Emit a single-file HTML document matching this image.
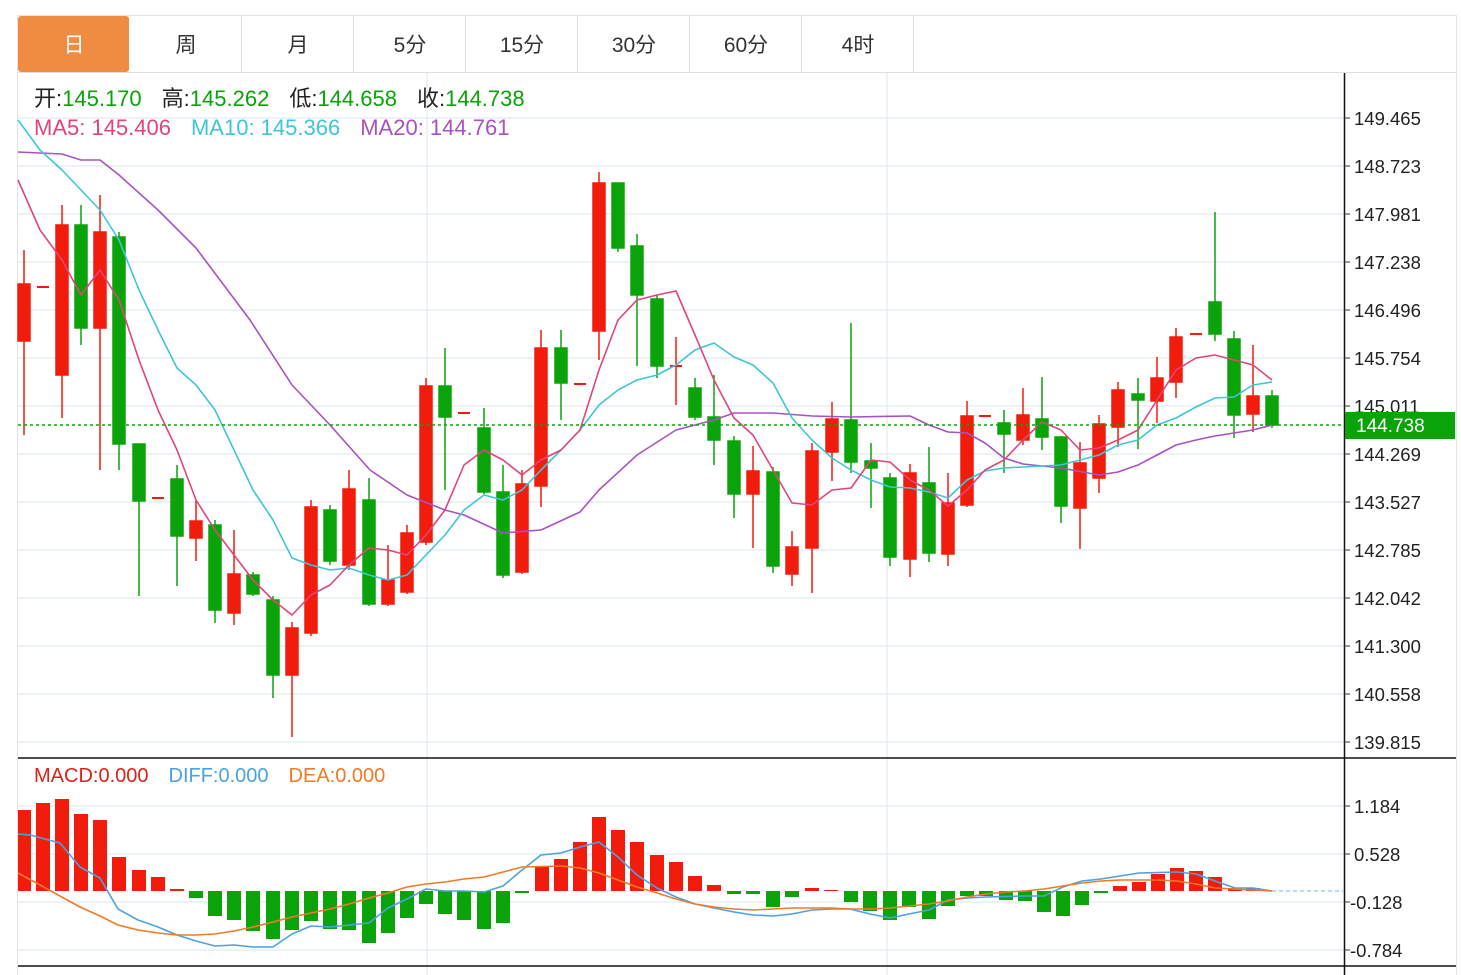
<!DOCTYPE html>
<html><head><meta charset="utf-8"><style>
html,body{margin:0;padding:0;background:#fff;}
svg{display:block;font-family:"Liberation Sans","Noto Sans CJK SC",sans-serif;}
</style></head><body>
<svg width="1461" height="975" viewBox="0 0 1461 975" xmlns="http://www.w3.org/2000/svg">
<rect x="17.5" y="15.5" width="1439" height="980" fill="#fff" stroke="#e2e2e2"/>
<rect x="18" y="16" width="111" height="56" rx="3" fill="#f08c42"/>
<g stroke="#e0e0e0"><line x1="241.5" y1="16" x2="241.5" y2="72"/><line x1="353.5" y1="16" x2="353.5" y2="72"/><line x1="465.5" y1="16" x2="465.5" y2="72"/><line x1="577.5" y1="16" x2="577.5" y2="72"/><line x1="689.5" y1="16" x2="689.5" y2="72"/><line x1="801.5" y1="16" x2="801.5" y2="72"/><line x1="913.5" y1="16" x2="913.5" y2="72"/><line x1="18" y1="72.5" x2="1456" y2="72.5"/></g>
<g font-size="21" text-anchor="middle" fill="#333"><text x="74" y="52" fill="#fff">日</text><text x="186" y="52">周</text><text x="298" y="52">月</text><text x="410" y="52">5分</text><text x="522" y="52">15分</text><text x="634" y="52">30分</text><text x="746" y="52">60分</text><text x="858" y="52">4时</text></g>
<g stroke="#e6edf2" stroke-width="1.5">
<line x1="18" y1="118" x2="1344" y2="118"/><line x1="18" y1="166" x2="1344" y2="166"/><line x1="18" y1="214" x2="1344" y2="214"/><line x1="18" y1="262" x2="1344" y2="262"/><line x1="18" y1="310" x2="1344" y2="310"/><line x1="18" y1="358" x2="1344" y2="358"/><line x1="18" y1="406" x2="1344" y2="406"/><line x1="18" y1="454" x2="1344" y2="454"/><line x1="18" y1="502" x2="1344" y2="502"/><line x1="18" y1="550" x2="1344" y2="550"/><line x1="18" y1="598" x2="1344" y2="598"/><line x1="18" y1="646" x2="1344" y2="646"/><line x1="18" y1="694" x2="1344" y2="694"/><line x1="18" y1="742" x2="1344" y2="742"/>
<line x1="18" y1="806" x2="1344" y2="806"/><line x1="18" y1="854" x2="1344" y2="854"/><line x1="18" y1="902" x2="1344" y2="902"/><line x1="18" y1="950" x2="1344" y2="950"/>
<line x1="427" y1="73" x2="427" y2="975"/><line x1="887" y1="73" x2="887" y2="975"/>
</g>
<g stroke="#111" stroke-width="1.5"><line x1="18" y1="758" x2="1456" y2="758"/><line x1="18" y1="966" x2="1456" y2="966"/><line x1="1344.5" y1="73" x2="1344.5" y2="975"/></g>
<g stroke="#333"><line x1="1344" y1="118" x2="1350" y2="118"/><line x1="1344" y1="166" x2="1350" y2="166"/><line x1="1344" y1="214" x2="1350" y2="214"/><line x1="1344" y1="262" x2="1350" y2="262"/><line x1="1344" y1="310" x2="1350" y2="310"/><line x1="1344" y1="358" x2="1350" y2="358"/><line x1="1344" y1="406" x2="1350" y2="406"/><line x1="1344" y1="454" x2="1350" y2="454"/><line x1="1344" y1="502" x2="1350" y2="502"/><line x1="1344" y1="550" x2="1350" y2="550"/><line x1="1344" y1="598" x2="1350" y2="598"/><line x1="1344" y1="646" x2="1350" y2="646"/><line x1="1344" y1="694" x2="1350" y2="694"/><line x1="1344" y1="742" x2="1350" y2="742"/><line x1="1344" y1="806" x2="1350" y2="806"/><line x1="1344" y1="854" x2="1350" y2="854"/><line x1="1344" y1="902" x2="1350" y2="902"/><line x1="1344" y1="950" x2="1350" y2="950"/></g>
<g font-size="18.5" fill="#222"><text x="1354" y="125">149.465</text><text x="1354" y="173">148.723</text><text x="1354" y="221">147.981</text><text x="1354" y="269">147.238</text><text x="1354" y="317">146.496</text><text x="1354" y="365">145.754</text><text x="1354" y="413">145.011</text><text x="1354" y="461">144.269</text><text x="1354" y="509">143.527</text><text x="1354" y="557">142.785</text><text x="1354" y="605">142.042</text><text x="1354" y="653">141.300</text><text x="1354" y="701">140.558</text><text x="1354" y="749">139.815</text>
<text x="1354" y="813">1.184</text><text x="1354" y="861">0.528</text><text x="1350" y="909">-0.128</text><text x="1350" y="957">-0.784</text></g>
<g id="c">
<g fill="#f21c0c" stroke="#f21c0c" stroke-width="1.5">
<line x1="24" y1="250" x2="24" y2="435"/><rect x="18" y="284" width="12" height="57"/>
<line x1="37" y1="287" x2="49" y2="287" stroke-width="2"/>
<line x1="62" y1="205" x2="62" y2="418"/><rect x="56" y="225" width="12" height="150"/>
<line x1="100" y1="195" x2="100" y2="470"/><rect x="94" y="232" width="12" height="96"/>
<line x1="152" y1="498" x2="164" y2="498" stroke-width="2"/>
<line x1="196" y1="500" x2="196" y2="561"/><rect x="190" y="521" width="12" height="17"/>
<line x1="234" y1="530" x2="234" y2="625"/><rect x="228" y="574" width="12" height="39"/>
<line x1="292" y1="622" x2="292" y2="737"/><rect x="286" y="628" width="12" height="47"/>
<line x1="311" y1="500" x2="311" y2="636"/><rect x="305" y="507" width="12" height="126"/>
<line x1="349" y1="470" x2="349" y2="570"/><rect x="343" y="489" width="12" height="76"/>
<line x1="388" y1="545" x2="388" y2="606"/><rect x="382" y="580" width="12" height="24"/>
<line x1="407" y1="525" x2="407" y2="594"/><rect x="401" y="533" width="12" height="59"/>
<line x1="426" y1="378" x2="426" y2="545"/><rect x="420" y="386" width="12" height="156"/>
<line x1="458" y1="413" x2="470" y2="413" stroke-width="2"/>
<line x1="522" y1="470" x2="522" y2="574"/><rect x="516" y="484" width="12" height="88"/>
<line x1="541" y1="330" x2="541" y2="507"/><rect x="535" y="348" width="12" height="138"/>
<line x1="574" y1="384" x2="586" y2="384" stroke-width="2"/>
<line x1="599" y1="172" x2="599" y2="360"/><rect x="593" y="183" width="12" height="148"/>
<line x1="676" y1="337" x2="676" y2="405"/><line x1="670" y1="366" x2="682" y2="366" stroke-width="2"/>
<line x1="753" y1="446" x2="753" y2="548"/><rect x="747" y="471" width="12" height="23"/>
<line x1="792" y1="531" x2="792" y2="586"/><rect x="786" y="547" width="12" height="27"/>
<line x1="812" y1="443" x2="812" y2="593"/><rect x="806" y="451" width="12" height="97"/>
<line x1="832" y1="402" x2="832" y2="481"/><rect x="826" y="419" width="12" height="33"/>
<line x1="910" y1="464" x2="910" y2="577"/><rect x="904" y="473" width="12" height="86"/>
<line x1="948" y1="473" x2="948" y2="566"/><rect x="942" y="503" width="12" height="51"/>
<line x1="967" y1="401" x2="967" y2="507"/><rect x="961" y="416" width="12" height="89"/>
<line x1="979" y1="416" x2="991" y2="416" stroke-width="2"/>
<line x1="1023" y1="388" x2="1023" y2="445"/><rect x="1017" y="415" width="12" height="25"/>
<line x1="1080" y1="442" x2="1080" y2="549"/><rect x="1074" y="463" width="12" height="45"/>
<line x1="1099" y1="415" x2="1099" y2="493"/><rect x="1093" y="424" width="12" height="54"/>
<line x1="1118" y1="382" x2="1118" y2="447"/><rect x="1112" y="390" width="12" height="37"/>
<line x1="1157" y1="357" x2="1157" y2="423"/><rect x="1151" y="378" width="12" height="23"/>
<line x1="1176" y1="328" x2="1176" y2="398"/><rect x="1170" y="337" width="12" height="45"/>
<line x1="1190" y1="334" x2="1202" y2="334" stroke-width="2"/>
<line x1="1253" y1="345" x2="1253" y2="432"/><rect x="1247" y="396" width="12" height="18"/>
</g>
<g fill="#0aa30a" stroke="#0aa30a" stroke-width="1.5">
<line x1="81" y1="205" x2="81" y2="345"/><rect x="75" y="225" width="12" height="103"/>
<line x1="119" y1="232" x2="119" y2="470"/><rect x="113" y="237" width="12" height="207"/>
<line x1="139" y1="444" x2="139" y2="596"/><rect x="133" y="444" width="12" height="57"/>
<line x1="177" y1="465" x2="177" y2="586"/><rect x="171" y="479" width="12" height="57"/>
<line x1="215" y1="520" x2="215" y2="623"/><rect x="209" y="525" width="12" height="85"/>
<line x1="253" y1="572" x2="253" y2="596"/><rect x="247" y="575" width="12" height="19"/>
<line x1="273" y1="596" x2="273" y2="698"/><rect x="267" y="600" width="12" height="75"/>
<line x1="330" y1="505" x2="330" y2="565"/><rect x="324" y="510" width="12" height="51"/>
<line x1="369" y1="478" x2="369" y2="606"/><rect x="363" y="500" width="12" height="104"/>
<line x1="445" y1="348" x2="445" y2="490"/><rect x="439" y="386" width="12" height="31"/>
<line x1="484" y1="408" x2="484" y2="494"/><rect x="478" y="428" width="12" height="64"/>
<line x1="503" y1="465" x2="503" y2="578"/><rect x="497" y="492" width="12" height="83"/>
<line x1="561" y1="330" x2="561" y2="420"/><rect x="555" y="348" width="12" height="35"/>
<line x1="618" y1="183" x2="618" y2="252"/><rect x="612" y="183" width="12" height="65"/>
<line x1="637" y1="234" x2="637" y2="366"/><rect x="631" y="246" width="12" height="49"/>
<line x1="657" y1="295" x2="657" y2="378"/><rect x="651" y="299" width="12" height="67"/>
<line x1="695" y1="378" x2="695" y2="420"/><rect x="689" y="388" width="12" height="29"/>
<line x1="714" y1="375" x2="714" y2="465"/><rect x="708" y="417" width="12" height="23"/>
<line x1="734" y1="436" x2="734" y2="518"/><rect x="728" y="441" width="12" height="53"/>
<line x1="773" y1="467" x2="773" y2="573"/><rect x="767" y="472" width="12" height="94"/>
<line x1="851" y1="323" x2="851" y2="473"/><rect x="845" y="420" width="12" height="42"/>
<line x1="871" y1="443" x2="871" y2="508"/><rect x="865" y="461" width="12" height="7"/>
<line x1="890" y1="473" x2="890" y2="566"/><rect x="884" y="478" width="12" height="79"/>
<line x1="929" y1="447" x2="929" y2="562"/><rect x="923" y="483" width="12" height="70"/>
<line x1="1004" y1="410" x2="1004" y2="473"/><rect x="998" y="423" width="12" height="11"/>
<line x1="1042" y1="377" x2="1042" y2="450"/><rect x="1036" y="419" width="12" height="18"/>
<line x1="1061" y1="436" x2="1061" y2="523"/><rect x="1055" y="437" width="12" height="69"/>
<line x1="1138" y1="378" x2="1138" y2="449"/><rect x="1132" y="394" width="12" height="6"/>
<line x1="1215" y1="212" x2="1215" y2="341"/><rect x="1209" y="302" width="12" height="32"/>
<line x1="1234" y1="331" x2="1234" y2="438"/><rect x="1228" y="339" width="12" height="76"/>
<line x1="1272" y1="390" x2="1272" y2="428"/><rect x="1266" y="396" width="12" height="29"/>
</g>
</g>
<g fill="none" stroke-width="1.6" stroke-linejoin="round">
<polyline stroke="#a653c0" points="18,152 62,154 81,160 100,160 119,175 158,210 196,248 250,320 292,385 330,425 370,470 407,495 445,510 464,515 503,533 541,530 580,512 599,490 637,455 676,430 695,425 714,420 734,413 773,413 812,416 851,417 910,416 929,425 948,432 967,433 985,443 1004,458 1023,464 1061,468 1099,475 1118,472 1138,465 1157,455 1176,445 1196,440 1215,436 1253,430 1272,425"/>
<polyline stroke="#3ec6d6" points="18,120 40,150 62,170 81,190 100,210 119,240 139,290 158,330 177,368 196,385 215,410 234,450 253,490 273,520 292,558 311,565 330,570 349,568 369,575 388,580 407,575 426,555 445,535 464,510 484,495 503,500 522,490 541,470 561,450 580,430 599,405 618,390 637,380 657,375 676,365 695,350 714,343 734,357 753,365 773,383 792,418 812,440 832,458 851,470 871,480 890,487 910,488 929,492 948,498 967,480 985,471 1004,468 1042,466 1061,465 1080,460 1099,455 1118,445 1138,440 1157,425 1176,418 1196,407 1215,398 1234,397 1253,385 1272,382"/>
<polyline stroke="#e0457a" points="18,180 40,230 62,260 81,295 100,270 119,300 139,360 158,410 177,450 196,500 215,530 234,555 253,580 273,600 292,615 311,595 330,585 349,565 369,548 388,550 407,555 426,535 445,510 464,465 484,450 503,460 522,475 541,460 561,450 580,430 599,370 618,320 637,300 657,295 676,291 695,335 714,380 734,418 753,435 773,470 792,503 812,505 832,490 851,488 871,460 890,462 910,480 929,490 948,506 967,490 985,470 1004,460 1023,440 1042,422 1061,430 1080,450 1099,448 1118,440 1138,430 1157,400 1176,370 1196,358 1215,355 1234,360 1253,365 1272,380"/>
</g>
<line x1="18" y1="425" x2="1344" y2="425" stroke="#0aa30a" stroke-width="1.5" stroke-dasharray="3,3"/>
<rect x="1345" y="412" width="110" height="27" fill="#0aa30a"/>
<text x="1356" y="432" font-size="19" fill="#fff">144.738</text>
<g font-size="22">
<text x="34" y="106"><tspan fill="#222">开:</tspan><tspan fill="#0aa30a">145.170</tspan><tspan fill="#222" dx="20">高:</tspan><tspan fill="#0aa30a">145.262</tspan><tspan fill="#222" dx="20">低:</tspan><tspan fill="#0aa30a">144.658</tspan><tspan fill="#222" dx="20">收:</tspan><tspan fill="#0aa30a">144.738</tspan></text>
<text x="34" y="135"><tspan fill="#e0457a">MA5: 145.406</tspan><tspan fill="#3ec6d6" dx="20">MA10: 145.366</tspan><tspan fill="#a653c0" dx="20">MA20: 144.761</tspan></text>
</g>
<g font-size="20"><text x="34" y="782"><tspan fill="#e0201a">MACD:0.000</tspan><tspan fill="#4aa3e0" dx="20">DIFF:0.000</tspan><tspan fill="#f07a25" dx="20">DEA:0.000</tspan></text></g>
<g fill="#f21c0c">
<rect x="18" y="810" width="13" height="81"/><rect x="36" y="803" width="14" height="88"/><rect x="55" y="799" width="14" height="92"/><rect x="74" y="814" width="14" height="77"/><rect x="93" y="820" width="14" height="71"/><rect x="112" y="857" width="14" height="34"/><rect x="132" y="870" width="14" height="21"/><rect x="151" y="877" width="14" height="14"/><rect x="170" y="889" width="14" height="2"/>
<rect x="535" y="867" width="14" height="24"/><rect x="554" y="859" width="14" height="32"/><rect x="573" y="842" width="14" height="49"/><rect x="592" y="817" width="14" height="74"/><rect x="611" y="830" width="14" height="61"/><rect x="630" y="842" width="14" height="49"/><rect x="650" y="855" width="14" height="36"/><rect x="669" y="862" width="14" height="29"/><rect x="688" y="876" width="14" height="15"/><rect x="707" y="885" width="14" height="6"/>
<rect x="805" y="888" width="14" height="3"/><rect x="824" y="890" width="14" height="1"/>
<rect x="1113" y="886" width="14" height="5"/><rect x="1132" y="882" width="14" height="9"/><rect x="1151" y="874" width="14" height="17"/><rect x="1170" y="868" width="14" height="23"/><rect x="1189" y="871" width="14" height="20"/><rect x="1208" y="877" width="14" height="14"/><rect x="1228" y="888" width="14" height="3"/><rect x="1246" y="888" width="14" height="3"/>
</g>
<g fill="#0aa30a">
<rect x="189" y="891" width="14" height="7"/><rect x="208" y="891" width="14" height="25"/><rect x="227" y="891" width="14" height="29"/><rect x="246" y="891" width="14" height="40"/><rect x="266" y="891" width="14" height="48"/><rect x="285" y="891" width="14" height="39"/><rect x="304" y="891" width="14" height="30"/><rect x="323" y="891" width="14" height="38"/><rect x="342" y="891" width="14" height="39"/><rect x="362" y="891" width="14" height="52"/><rect x="381" y="891" width="14" height="42"/><rect x="400" y="891" width="14" height="27"/><rect x="419" y="891" width="14" height="13"/><rect x="438" y="891" width="14" height="23"/><rect x="457" y="891" width="14" height="29"/><rect x="477" y="891" width="14" height="38"/><rect x="496" y="891" width="14" height="32"/><rect x="515" y="891" width="14" height="2"/>
<rect x="727" y="891" width="14" height="3"/><rect x="746" y="891" width="14" height="3"/><rect x="766" y="891" width="14" height="16"/><rect x="785" y="891" width="14" height="6"/>
<rect x="844" y="891" width="14" height="11"/><rect x="863" y="891" width="14" height="20"/><rect x="883" y="891" width="14" height="29"/><rect x="902" y="891" width="14" height="16"/><rect x="922" y="891" width="14" height="28"/><rect x="941" y="891" width="14" height="15"/><rect x="960" y="891" width="14" height="5"/><rect x="979" y="891" width="14" height="5"/><rect x="999" y="891" width="14" height="9"/><rect x="1018" y="891" width="14" height="10"/><rect x="1037" y="891" width="14" height="21"/><rect x="1056" y="891" width="14" height="25"/><rect x="1075" y="891" width="14" height="14"/><rect x="1094" y="891" width="14" height="2"/>
</g>
<line x1="1272" y1="891" x2="1344" y2="891" stroke="#9fd3ea" stroke-width="1.5" stroke-dasharray="4,3"/>
<g fill="none" stroke-width="1.6" stroke-linejoin="round">
<polyline stroke="#4aa3e0" points="18,834 30,835 60,843 80,867 100,878 118,909 138,920 158,927 177,935 196,941 215,946 234,945 253,947 273,947 292,934 311,926 330,927 349,925 369,923 388,908 407,899 426,889 445,891 464,891 484,892 503,886 522,870 541,855 561,853 580,847 599,842 618,857 637,875 657,888 676,897 695,904 714,908 734,912 753,915 773,916 792,914 812,910 831,909 850,909 870,914 890,918 909,914 929,910 948,900 967,898 986,897 1025,896 1044,896 1063,887 1082,881 1101,879 1120,876 1139,873 1177,872 1196,874 1215,881 1235,888 1253,888 1272,891"/>
<polyline stroke="#f07a25" points="18,873 40,885 60,896 80,907 100,916 118,925 138,930 158,933 177,935 196,935 215,934 234,931 253,927 273,922 292,917 311,913 330,909 349,904 369,898 388,893 407,887 426,884 445,882 464,879 484,877 503,872 522,867 561,866 580,868 599,873 618,880 637,887 657,893 676,899 695,904 714,907 734,909 753,910 773,909 792,908 831,908 850,909 870,909 890,908 909,906 929,904 948,901 967,897 986,894 1006,892 1025,891 1044,889 1063,886 1082,883 1101,881 1120,880 1158,880 1177,881 1196,884 1215,888 1272,891"/>
</g>
</svg>
</body></html>
